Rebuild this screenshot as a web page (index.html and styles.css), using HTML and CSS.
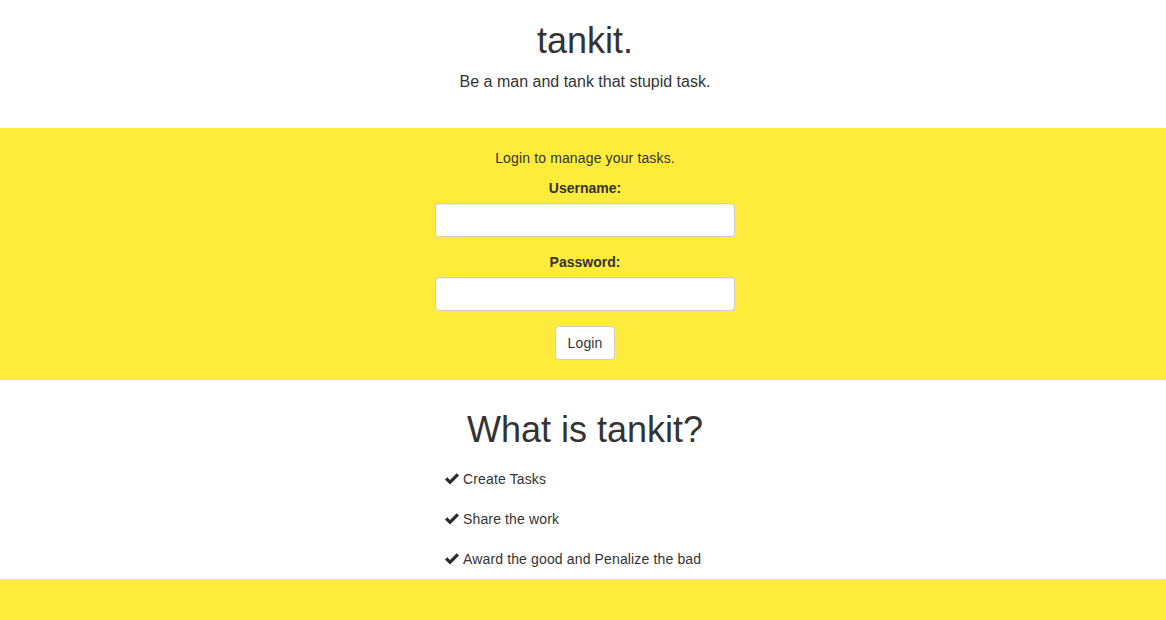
FILE: index.html
```html
<!DOCTYPE html>
<html lang="en">
<head>
    <meta charset="UTF-8">
    <meta name="viewport" content="width=device-width, initial-scale=1.0">
    <title>tankit.</title>
    <link rel="stylesheet" href="styles.css">
</head>
<body>
    <header class="masthead">
        <h1>tankit.</h1>
        <p class="lead">Be a man and tank that stupid task.</p>
    </header>

    <section class="login">
        <p>Login to manage your tasks.</p>
        <form class="login-form">
            <div class="form-group">
                <label for="username">Username:</label>
                <input type="text" id="username" class="form-control">
            </div>
            <div class="form-group">
                <label for="password">Password:</label>
                <input type="password" id="password" class="form-control">
            </div>
            <button type="button" class="btn">Login</button>
        </form>
    </section>

    <section class="about">
        <h1>What is tankit?</h1>
        <ul class="features">
            <li><svg class="check" viewBox="0 0 14 12"><polygon points="0,6.6 2.3,4.3 5,7 11.7,0.3 14,2.6 5,11.6"/></svg>Create Tasks</li>
            <li><svg class="check" viewBox="0 0 14 12"><polygon points="0,6.6 2.3,4.3 5,7 11.7,0.3 14,2.6 5,11.6"/></svg>Share the work</li>
            <li><svg class="check" viewBox="0 0 14 12"><polygon points="0,6.6 2.3,4.3 5,7 11.7,0.3 14,2.6 5,11.6"/></svg>Award the good and Penalize the bad</li>
        </ul>
    </section>

    <footer class="footer"></footer>
</body>
</html>
```

FILE: styles.css
```css
body {
    margin: 0;
    font-family: "Liberation Sans", Arial, sans-serif;
    font-size: 14px;
    line-height: 1.42857;
    color: #333;
    background: #fff;
}
h1 {
    font-size: 36px;
    font-weight: normal;
    line-height: 1.1;
    margin: 20px 0 10px;
}
.masthead {
    text-align: center;
    padding: 1px 0 25px 4px;
}
.masthead h1 {
    margin-top: 20px;
}
.lead {
    font-size: 16px;
    margin: 0 0 10px;
}
.login {
    background-color: #ffeb3b;
    text-align: center;
    padding: 21px 0 20px 4px;
}
.login p {
    margin: 0 0 10px;
    letter-spacing: 0.14px;
}
.login-form {
    width: 300px;
    margin: 0 auto;
}
.form-group {
    margin-bottom: 16px;
}
.form-group:last-of-type {
    margin-bottom: 15px;
}
.form-group label {
    display: block;
    font-weight: bold;
    margin-bottom: 4px;
}
.form-control {
    display: block;
    box-sizing: border-box;
    width: 100%;
    height: 34px;
    padding: 6px 12px;
    font-size: 14px;
    border: 1px solid #ccc;
    border-radius: 4px;
    background: #fff;
    box-shadow: inset 0 1px 1px rgba(0, 0, 0, 0.075);
}
.btn {
    box-sizing: border-box;
    height: 34px;
    padding: 6px 12px;
    font-family: inherit;
    font-size: 14px;
    letter-spacing: 0.1px;
    color: #333;
    background: #fff;
    border: 1px solid #ccc;
    border-radius: 4px;
    cursor: pointer;
}
.about {
    padding: 10px 0 0 4px;
}
.about h1 {
    text-align: center;
    margin: 20px 0 9px;
}
.features {
    list-style: none;
    width: 290px;
    margin: 0 auto;
    padding: 0 0 0 10px;
}
.features li {
    padding: 11px 0 9px;
    letter-spacing: 0.14px;
}
.check {
    width: 14px;
    height: 12px;
    margin-right: 4px;
    vertical-align: -1px;
    fill: #2b2b2b;
}
.footer {
    background-color: #ffeb3b;
    height: 120px;
}
```
